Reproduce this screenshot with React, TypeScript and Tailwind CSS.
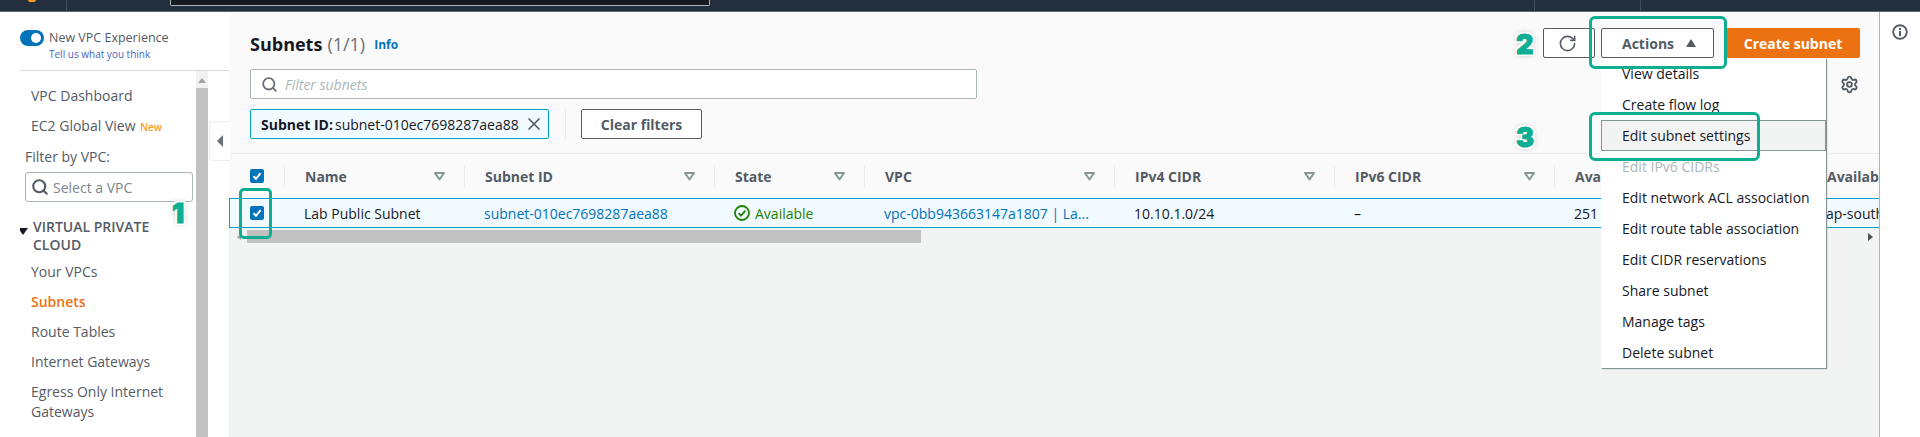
import React from "react";
import { RotateCw, Settings, X, Search } from "lucide-react";

const Check = () => (
  <span className="flex h-[14px] w-[14px] items-center justify-center rounded-[2px] bg-[#0073bb]">
    <svg width="12" height="12" viewBox="0 0 12 12" fill="none">
      <path d="M2.5 6.2 5 8.8 9.6 3.2" stroke="#fff" strokeWidth="2" />
    </svg>
  </span>
);

const SortIcon = () => (
  <svg width="11" height="9" viewBox="0 0 11 9" fill="none" className="shrink-0">
    <path d="M1 1h9L5.5 7.5z" stroke="#879596" strokeWidth="2" strokeLinejoin="round" />
  </svg>
);

const columns = [
  { label: "Name", w: "w-[180px]", value: "Lab Public Subnet", cls: "text-[#16191f]" },
  { label: "Subnet ID", w: "w-[250px]", value: "subnet-010ec7698287aea88", cls: "text-[#0073bb]" },
  { label: "State", w: "w-[150px]", value: "Available", cls: "text-[#1d8102]" },
  { label: "VPC", w: "w-[250px]", value: "vpc-0bb943663147a1807 | La...", cls: "text-[#0073bb]" },
  { label: "IPv4 CIDR", w: "w-[220px]", value: "10.10.1.0/24", cls: "text-[#16191f]" },
  { label: "IPv6 CIDR", w: "w-[220px]", value: "–", cls: "text-[#16191f]" },
  { label: "Available IPv4", w: "w-[252px]", value: "251", cls: "text-[#16191f]" },
  { label: "Availability Zone", w: "w-[220px]", value: "ap-south-1a", cls: "text-[#16191f]" },
];

const navItems = ["Your VPCs", "Subnets", "Route Tables", "Internet Gateways", "Egress Only Internet Gateways", "DHCP Option Sets"];

const menu = [
  "View details",
  "Create flow log",
  "Edit subnet settings",
  "Edit IPv6 CIDRs",
  "Edit network ACL association",
  "Edit route table association",
  "Edit CIDR reservations",
  "Share subnet",
  "Manage tags",
  "Delete subnet",
];

const numberCls =
  "absolute font-['Inter','Open_Sans',sans-serif] font-black text-[27px] leading-none text-[#0fae93] [-webkit-text-stroke:1px_#0fae93] [text-shadow:2px_2px_0_#fff,-2px_-2px_0_#fff,2px_-2px_0_#fff,-2px_2px_0_#fff,0_0_6px_#999]";

export default function App() {
  return (
    <div className="relative flex h-[437px] w-[1920px] flex-col overflow-hidden bg-white font-['Open_Sans','Noto_Sans',sans-serif] text-[14px] text-[#16191f]">
      {/* top bar */}
      <div className="flex h-[12px] shrink-0 items-start border-b border-[#5c6670] bg-[#232f3e]">
        <div className="ml-[28px] h-[2px] w-[8px] rounded-b-full bg-[#f49b1f]" />
        <div className="ml-[30px] h-[11px] w-px bg-[#414d5c]" />
        <div className="ml-[103px] h-[6px] w-[540px] rounded-b-[2px] border-x border-b border-[#aab7b8] bg-[#16191f]" />
        <div className="ml-[824px] h-[11px] w-px bg-[#414d5c]" />
        <div className="ml-[105px] h-[11px] w-px bg-[#414d5c]" />
      </div>

      <div className="flex min-h-0 flex-1">
        {/* sidebar */}
        <aside className="flex w-[229px] shrink-0 flex-col pl-5">
          <div className="h-[59px] shrink-0 border-b border-[#d5dbdb] pt-[18px]">
            <div className="flex items-center">
              <span className="flex h-[16px] w-[24px] items-center justify-end rounded-full bg-[#0073bb] pr-[3px]">
                <span className="h-[10px] w-[10px] rounded-full bg-white" />
              </span>
              <span className="ml-[5px] text-[12.5px] leading-[16px] text-[#545b64]">New VPC Experience</span>
            </div>
            <div className="ml-[29px] text-[10px] leading-[16px] text-[#4a63c0]">Tell us what you think</div>
          </div>
          <div className="flex min-h-0 flex-1">
            <nav className="w-[176px] shrink-0 overflow-hidden text-[#545b64]">
              <div className="ml-[11px] mt-[10px] leading-[30px]">VPC Dashboard</div>
              <div className="ml-[11px] leading-[30px]">
                EC2 Global View <span className="ml-[1px] text-[10px] font-semibold text-[#f89c24]">New</span>
              </div>
              <div className="ml-[5px] leading-[30px]">Filter by VPC:</div>
              <div className="ml-[5px] flex h-[30px] w-[168px] items-center rounded-[3px] border border-[#aab7b8] pl-[5px] text-[#7b868a]">
                <Search size={18} strokeWidth={2.8} className="mr-[4px] text-[#545b64]" />
                Select a VPC
              </div>
              <div className="-ml-[2px] mt-[16px] flex items-start font-semibold leading-[18px]">
                <span className="mr-[5px] mt-[10px] h-0 w-0 border-x-[5px] border-t-[7px] border-x-transparent border-t-[#16191f]" />
                <span>VIRTUAL PRIVATE CLOUD</span>
              </div>
              <ul className="mt-[3px]">
                {navItems.map((n) => (
                  <li
                    key={n}
                    className={
                      n === "Subnets"
                        ? "ml-[11px] py-[5px] font-semibold leading-[20px] text-[#ec7211]"
                        : "ml-[11px] py-[5px] leading-[20px]"
                    }
                  >
                    {n}
                  </li>
                ))}
              </ul>
            </nav>
            <div className="flex w-[12px] shrink-0 flex-col bg-[#c1c1c1]">
              <div className="flex h-[17px] shrink-0 items-start justify-center bg-[#f1f1f1] pt-[7px]">
                <span className="h-0 w-0 border-x-[4px] border-b-[5px] border-x-transparent border-b-[#a3a3a3]" />
              </div>
            </div>
          </div>
        </aside>

        {/* main */}
        <main className="flex min-w-0 flex-1 flex-col border-r border-[#aab7b8] bg-[#f2f3f3]">
          <div className="h-[142px] shrink-0 border-b border-[#eaeded] bg-[#fafafa] pl-[21px]">
            <div className="flex h-[57px] items-center pt-[6px]">
              <h1 className="text-[18px] font-bold leading-[24px]">Subnets</h1>
              <span className="ml-[5px] text-[18px] leading-[24px] text-[#687078]">(1/1)</span>
              <span className="ml-[9px] pt-[2px] text-[12px] font-bold text-[#0073bb]">Info</span>
            </div>
            <div className="flex h-[30px] w-[727px] items-center rounded-[2px] border border-[#aab7b8] bg-white pl-[10px] italic text-[#aab7b8]">
              <Search size={17} strokeWidth={2.6} className="mr-[7px] text-[#687078]" />
              Filter subnets
            </div>
            <div className="mt-[10px] flex h-[30px] items-center">
              <div className="flex h-[30px] w-[299px] items-center whitespace-nowrap rounded-[2px] border border-[#00a1c9] bg-[#f1faff] pl-[10px] pr-[4px]">
                <span className="font-bold">Subnet ID:</span>
                <span className="ml-[2px]">subnet-010ec7698287aea88</span>
                <X size={20} strokeWidth={2} className="ml-auto text-[#545b64]" />
              </div>
              <div className="ml-[16px] h-[30px] w-px bg-[#eaeded]" />
              <button className="ml-[15px] h-[30px] w-[121px] rounded-[2px] border border-[#545b64] bg-white font-bold text-[#545b64]">
                Clear filters
              </button>
            </div>
          </div>

          <div className="overflow-hidden">
            <div className="flex h-[44px] w-[1800px] items-center bg-[#fafafa]">
              <div className="flex w-[55px] shrink-0 pl-[21px]">
                <Check />
              </div>
              {columns.map((c) => (
                <div key={c.label} className={`${c.w} flex h-[21px] shrink-0 items-center justify-between border-l border-[#eaeded] pl-5 pr-[19px]`}>
                  <span className="whitespace-nowrap font-bold text-[#545b64]">{c.label}</span>
                  <SortIcon />
                </div>
              ))}
            </div>
            <div className="flex h-[30px] w-[1651px] items-center border border-[#00a1c9] bg-[#f1faff]">
              <div className="flex w-[54px] shrink-0 pl-[20px]">
                <Check />
              </div>
              {columns.map((c) => (
                <div key={c.label} className={`${c.w} flex shrink-0 items-center whitespace-nowrap pl-5 ${c.cls}`}>
                  {c.label === "State" && (
                    <svg width="16" height="16" viewBox="0 0 16 16" fill="none" className="mr-[5px]">
                      <circle cx="8" cy="8" r="7" stroke="#1d8102" strokeWidth="1.8" />
                      <path d="M4.6 8.2 7 10.6 11.4 5.6" stroke="#1d8102" strokeWidth="1.8" />
                    </svg>
                  )}
                  {c.value}
                </div>
              ))}
            </div>
          </div>

          <div className="mt-[2px] flex h-[13px] shrink-0 items-center">
            <span className="ml-[8px] h-0 w-0 border-y-[3px] border-r-[4px] border-y-transparent border-r-[#a3a3a3]" />
            <div className="ml-[6px] h-[13px] w-[674px] bg-[#c1c1c1]" />
            <span className="ml-auto mr-[6px] h-0 w-0 border-y-[4px] border-l-[5px] border-y-transparent border-l-[#505050]" />
          </div>
        </main>

        {/* right panel */}
        <div className="flex w-[40px] shrink-0 justify-center pt-[12px]">
          <svg width="16" height="16" viewBox="0 0 16 16" fill="none">
            <circle cx="8" cy="8" r="6.8" stroke="#545b64" strokeWidth="1.9" />
            <rect x="7" y="7" width="2" height="5" fill="#545b64" />
            <rect x="7" y="4" width="2" height="2" fill="#545b64" />
          </svg>
        </div>
      </div>

      {/* overlays */}
      <div className="absolute left-[209px] top-[121px] flex h-[40px] w-[21px] items-center justify-center rounded-l-[4px] border border-r-0 border-[#eaeded] bg-white">
        <span className="h-0 w-0 border-y-[6px] border-r-[6px] border-y-transparent border-r-[#687078]" />
      </div>

      {/* action bar */}
      <div className="absolute left-[1543px] top-[28px] flex items-start">
        <button className="flex h-[30px] w-[52px] items-center rounded-[2px] border border-[#545b64] bg-white pl-[14px]">
          <RotateCw size={19} strokeWidth={2} className="text-[#545b64]" />
        </button>
        <button className="ml-[6px] flex h-[30px] w-[113px] items-center rounded-[2px] border border-[#545b64] bg-white pl-[20px] font-bold text-[#545b64]">
          Actions
          <span className="ml-[12px] h-0 w-0 border-x-[5.5px] border-b-[8px] border-x-transparent border-b-[#545b64]" />
        </button>
        <button className="ml-[12px] h-[30px] w-[134px] rounded-[2px] bg-[#ec7211] font-bold text-white">Create subnet</button>
      </div>

      <Settings size={19} strokeWidth={2.4} className="absolute left-[1840px] top-[75px] text-[#545b64]" />

      {/* dropdown */}
      <div className="absolute left-[1601px] top-[58px] w-[225px] bg-white shadow-[1px_1px_1px_#879596]">
        {menu.map((m) => (
          <div
            key={m}
            className={
              m === "Edit subnet settings"
                ? "flex h-[31px] items-center border border-[#879596] bg-[#f2f3f3] pl-[20px]"
                : m === "Edit IPv6 CIDRs"
                  ? "flex h-[31px] items-center pl-[21px] text-[#aab7b8]"
                  : "flex h-[31px] items-center pl-[21px]"
            }
          >
            {m}
          </div>
        ))}
      </div>

      {/* annotations */}
      <div className="absolute left-[239px] top-[188px] h-[51px] w-[33px] rounded-[5px] border-[3px] border-[#0fae93]" />
      <div className="absolute left-[1589px] top-[16px] h-[53px] w-[138px] rounded-[6px] border-[3px] border-[#0fae93]" />
      <div className="absolute left-[1589px] top-[112px] h-[49px] w-[171px] rounded-[6px] border-[3px] border-[#0fae93]" />
      <span className={`${numberCls} left-[172px] top-[200px]`}>1</span>
      <span className={`${numberCls} left-[1516px] top-[31px]`}>2</span>
      <span className={`${numberCls} left-[1516px] top-[124px]`}>3</span>
    </div>
  );
}
